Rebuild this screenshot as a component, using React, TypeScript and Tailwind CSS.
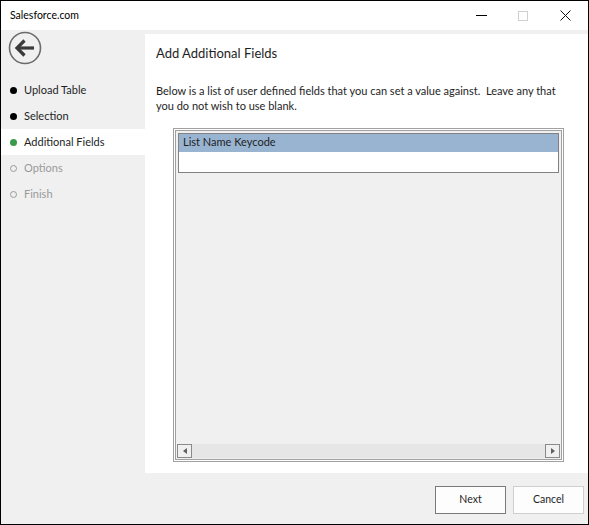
const STEPS = [
  { label: "Upload Table", state: "done" },
  { label: "Selection", state: "done" },
  { label: "Additional Fields", state: "current" },
  { label: "Options", state: "todo" },
  { label: "Finish", state: "todo" },
];

function BackButton() {
  return (
    <svg width="34" height="34" viewBox="0 0 34 34">
      <circle cx="17" cy="17" r="15.5" fill="none" stroke="#6b6b6b" strokeWidth="1.6" />
      <path d="M9 17H26" stroke="#3a3a3a" strokeWidth="3.2" />
      <path d="M16.5 9.5L9 17L16.5 24.5" stroke="#3a3a3a" strokeWidth="3.2" fill="none" />
    </svg>
  );
}

function Bullet({ state }: { state: string }) {
  if (state === "done") return <span className="w-[7px] h-[7px] rounded-full bg-black shrink-0" />;
  if (state === "current") return <span className="w-[7px] h-[7px] rounded-full bg-[#3c9a4c] shrink-0" />;
  return <span className="w-[7px] h-[7px] rounded-full border border-[#9a9a9a] shrink-0" />;
}

export default function App() {
  return (
    <div
      className="w-[589px] h-[525px] border border-black bg-[#f0f0f0] flex flex-col text-[10.5px] text-[#1e1e1e]"
      style={{ fontFamily: 'Lato, "Open Sans", sans-serif' }}
    >
      {/* Title bar */}
      <div className="h-[29px] bg-white flex items-center shrink-0">
        <span className="pl-[9px] flex-1 text-black text-[10.5px]">Salesforce.com</span>
        <div className="flex items-center h-full">
          <div className="w-[46px] h-full flex items-center justify-center">
            <span className="w-[11px] h-px bg-black" />
          </div>
          <div className="w-[38px] h-full flex items-center justify-center">
            <span className="w-[10px] h-[10px] border border-[#d0d0d0]" />
          </div>
          <div className="w-[46px] h-full flex items-center justify-center">
            <svg width="11" height="11" viewBox="0 0 11 11">
              <path d="M0.5 0.5L10.5 10.5M10.5 0.5L0.5 10.5" stroke="#111" strokeWidth="1" />
            </svg>
          </div>
        </div>
      </div>

      {/* Body */}
      <div className="flex flex-1 min-h-0 pt-[4px]">
        {/* Sidebar */}
        <div className="w-[144px] shrink-0 flex flex-col text-[11px]">
          <div className="h-[46px] pl-[7px] flex items-start -mt-[3px]">
            <BackButton />
          </div>
          {STEPS.map((s) => (
            <div
              key={s.label}
              className={`h-[26px] flex items-center gap-[7px] pl-[9px] ${
                s.state === "current" ? "bg-white" : ""
              }`}
            >
              <Bullet state={s.state} />
              <span className={s.state === "todo" ? "text-[#9a9a9a]" : "text-[#1e1e1e]"}>{s.label}</span>
            </div>
          ))}
        </div>

        {/* Main panel */}
        <div className="flex-1 bg-white flex flex-col pl-[11px] pr-[24px]">
          <div className="pt-[10px] text-[13px] text-[#1e1e1e]">Add Additional Fields</div>
          <p className="mt-[19px] leading-[15px] text-[11px] pr-[4px]">
            Below is a list of user defined fields that you can set a value against.&nbsp; Leave any that you do
            not wish to use blank.
          </p>

          {/* Field box */}
          <div className="mt-[15px] ml-[17px] mr-0 mb-[11px] flex-1 border border-[#a0a0a0] p-px bg-white">
            <div className="h-full border border-[#a0a0a0] bg-[#f0f0f0] flex flex-col">
              <div className="m-[2px] border border-[#828282] bg-white h-[40px]">
                <div className="h-[18px] bg-[#99b4d1] flex items-center pl-[4px] text-[11px] text-[#1e1e1e]">
                  List Name Keycode
                </div>
              </div>
              <div className="flex-1" />
              {/* Horizontal scrollbar */}
              <div className="h-[14px] flex bg-[#e6e6e6] mx-px mb-px">
                <div className="w-[15px] h-full border border-[#8a8a8a] bg-[#f0f0f0] flex items-center justify-center">
                  <svg width="4" height="6" viewBox="0 0 4 6">
                    <path d="M4 0L0 3L4 6Z" fill="#606060" />
                  </svg>
                </div>
                <div className="flex-1" />
                <div className="w-[15px] h-full border border-[#8a8a8a] bg-[#f0f0f0] flex items-center justify-center">
                  <svg width="4" height="6" viewBox="0 0 4 6">
                    <path d="M0 0L4 3L0 6Z" fill="#606060" />
                  </svg>
                </div>
              </div>
            </div>
          </div>
        </div>
      </div>

      {/* Footer */}
      <div className="h-[51px] shrink-0 flex items-start justify-end gap-[7px] pt-[13px] pr-[4px]">
        <button className="w-[71px] h-[28px] border border-[#7a7a7a] bg-[#fdfdfd] text-[#1e1e1e]">Next</button>
        <button className="w-[71px] h-[28px] border border-[#cfcfcf] bg-[#fdfdfd] text-[#1e1e1e]">Cancel</button>
      </div>
    </div>
  );
}
